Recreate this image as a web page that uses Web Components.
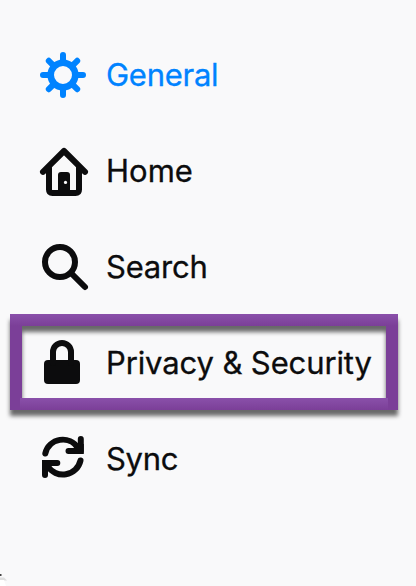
<!DOCTYPE html>
<html lang="en">
<head>
<meta charset="utf-8">
<title>Preferences</title>
<style>
  html, body { margin: 0; height: 100%; }
  body { position: relative; overflow: hidden; background: #f9f9fa; color: #0c0c0d; font-family: Inter, "Liberation Sans", sans-serif; }
  [icon="general"] { --tracking: -.27px; }
  [icon="search"] { --tracking: -.2px; }
  [icon="privacy"] { --tracking: -.12px; }
  [icon="sync"] { --tracking: -.3px; }
</style>
</head>
<body>

<template id="category-list-template">
<style>
:host { display: flex; flex-direction: column; padding-top: 27px; }
</style>
<slot></slot>
</template>

<template id="category-item-template">
<style>
:host { display: flex; position: relative; align-items: center; height: 96px; padding-left: 40px; gap: 66px; font-size: 31px; line-height: 40px; white-space: nowrap; }
:host([selected]) { color: #0083ff; }
.label { letter-spacing: var(--tracking, 0); -webkit-text-stroke: .3px currentColor; }
category-icon { margin-right: -48px; }
</style>
<category-icon></category-icon>
<span class="label"><slot></slot></span>
<slot name="callout"></slot>
</template>

<template id="category-icon-template">
<style>
:host { display: block; flex: none; width: 48px; height: 48px; }
svg { display: block; overflow: visible; fill: none; stroke: currentColor; stroke-width: 6; stroke-linecap: round; stroke-linejoin: round; }
.solid { fill: currentColor; stroke: none; }
.knob { fill: #f9f9fa; stroke: none; }
</style>
<svg width="48" height="48" viewBox="0 0 48 48"></svg>
</template>

<template id="callout-frame-template">
<style>
:host { display: block; position: absolute; left: 10px; top: -1px; width: 388px; height: 96px; filter: drop-shadow(0 6px 2px rgba(0, 0, 0, .58)); }
.frame {
  height: 100%;
  background:
    linear-gradient(#8a50aa, #7b3f98) 0 0 / 100% 12px no-repeat,
    linear-gradient(#8a50aa, #7b3f98) 10px 84px / 368px 12px no-repeat,
    #7b3f98;
  clip-path: polygon(evenodd, 0 0, 100% 0, 100% 100%, 0 100%, 0 0, 12px 12px, 376px 12px, 376px 84px, 12px 84px, 12px 12px);
}
</style>
<div class="frame"></div>
</template>

<template id="corner-mark-template">
<style>
:host { display: block; position: absolute; left: 0; bottom: 0; width: 8px; height: 14px; }
svg { display: block; }
</style>
<svg width="8" height="14">
  <path d="M0 5.500h4l3 3H0z" fill="#ddd" />
  <path d="M0 8h4l2 6H0z" fill="#fff" />
  <rect x="0" y="2" width="1.500" height="2" fill="#444" />
</svg>
</template>

<category-list>
  <category-item icon="general" selected>General</category-item>
  <category-item icon="home">Home</category-item>
  <category-item icon="search">Search</category-item>
  <category-item icon="privacy">Privacy &amp; Security<callout-frame slot="callout"></callout-frame></category-item>
  <category-item icon="sync">Sync</category-item>
</category-list>
<corner-mark></corner-mark>

<script>

const ICONS = {
  general: `
    <circle cx="23" cy="24" r="12.300" stroke-width="6.600" />
    <path d="M23 4v8M23 36v8M3 24h8M35 24h8M8.800 9.800l5 5M32.200 33.200l5 5M37.200 9.800l-5 5M13.800 33.200l-5 5" />`,
  home: `
    <path d="M3 24.800L24 4l21 20.800" />
    <path d="M9 21v21.500q0 3.500 3.500 3.500h23q3.500 0 3.500-3.500V21" />
    <path class="solid" d="M18 46V28q0-3 3-3h6q3 0 3 3v18z" />
    <circle class="knob" cx="25.500" cy="35.400" r="1.600" />`,
  search: `
    <circle cx="20" cy="19" r="15" />
    <path d="M31 30l14 14" />`,
  privacy: `
    <rect class="solid" x="4" y="21" width="36" height="24" rx="4" />
    <path d="M13 24V13a9 9 0 0 1 18 0v11" />`,
  sync: `
    <path d="M5.300 18.500A18 18 0 0 1 38 13M40.500 25.500A18 18 0 0 1 7.600 31" />
    <path d="M40.800 4v12H28.500M5 40V28h12.300" />
    <path class="solid" d="M38 9h5.800v10H34zM8 35H2V25h10z" />`
};

class TemplateElement extends HTMLElement {

  constructor() {
    super();
    this.attachShadow({ mode: 'open' });
    const template = document.getElementById(this.localName + '-template').content;
    this.shadowRoot.appendChild(template.cloneNode(true));
  }

}

class CategoryIcon extends TemplateElement {

  static get observedAttributes() {
    return ['name'];
  }

  attributeChangedCallback(name, oldValue, newValue) {
    this.shadowRoot.querySelector('svg').innerHTML = ICONS[newValue] || '';
  }

}

class CategoryItem extends TemplateElement {

  connectedCallback() {
    this.shadowRoot.querySelector('category-icon').setAttribute('name', this.getAttribute('icon'));
  }

}

class CategoryList extends TemplateElement {}
class CalloutFrame extends TemplateElement {}
class CornerMark extends TemplateElement {}

customElements.define('category-icon', CategoryIcon);
customElements.define('category-item', CategoryItem);
customElements.define('category-list', CategoryList);
customElements.define('callout-frame', CalloutFrame);
customElements.define('corner-mark', CornerMark);
</script>
</body>
</html>
